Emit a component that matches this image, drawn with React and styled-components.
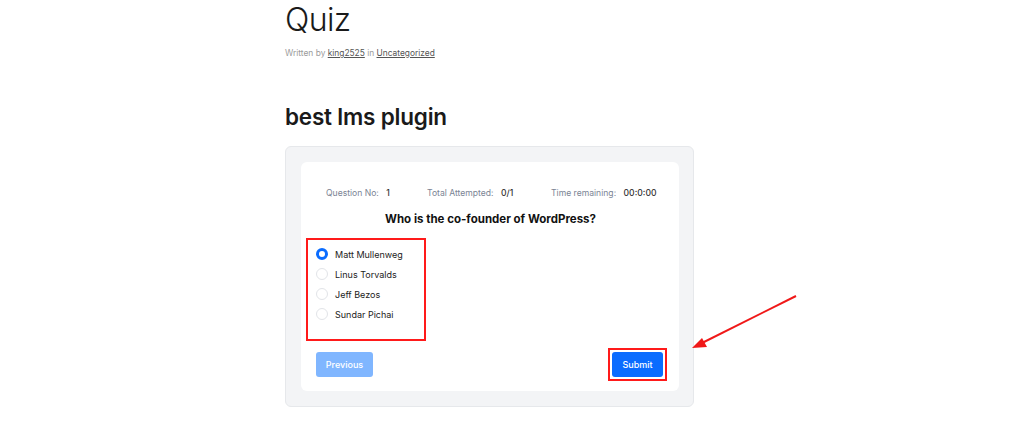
import React from "react";
import styled, { createGlobalStyle } from "styled-components";

const GlobalStyle = createGlobalStyle`
  html, body {
    margin: 0;
    padding: 0;
    background: #ffffff;
  }
  body {
    font-family: Inter, "Noto Sans", "Liberation Sans", sans-serif;
    color: #111;
  }
`;

const Page = styled.div`
  position: relative;
  width: 1024px;
  height: 448px;
  overflow: hidden;
  padding-left: 285px;
  box-sizing: border-box;
`;

const Column = styled.div`
  width: 409px;
  display: flex;
  flex-direction: column;
`;

const Title = styled.h1`
  margin: 2px 0 0;
  font-size: 32px;
  line-height: 36px;
  font-weight: 300;
  color: #1a1a1a;
  letter-spacing: -0.6px;
`;

const Byline = styled.div`
  margin-top: 9px;
  font-size: 8.4px;
  line-height: 12px;
  color: #9a9a9a;

  a {
    color: #555;
    text-decoration: underline;
  }
`;

const QuizName = styled.h2`
  margin: 44px 0 0;
  font-size: 22.5px;
  line-height: 28px;
  font-weight: 600;
  color: #1a1a1a;
  letter-spacing: -0.2px;
`;

const Outer = styled.div`
  margin-top: 15px;
  background: #f3f4f6;
  border: 1px solid #e6e8eb;
  border-radius: 6px;
  padding: 15px 14px 15px 15px;
`;

const Card = styled.div`
  background: #fff;
  border-radius: 6px;
  padding: 25px 14px 14px 15px;
  height: 229px;
  box-sizing: border-box;
  display: flex;
  flex-direction: column;
`;

const MetaRow = styled.div`
  display: grid;
  grid-template-columns: 101px 124px auto;
  padding-left: 10px;
  font-size: 8.6px;
  line-height: 12px;
`;

const Meta = styled.div`
  color: #7b8494;
  white-space: nowrap;

  b {
    margin-left: 5px;
    color: #333;
    font-weight: 500;
  }
`;

const Question = styled.div`
  margin-top: 13px;
  text-align: center;
  font-size: 11.5px;
  line-height: 14px;
  font-weight: 700;
  color: #111;
`;

const Options = styled.div`
  margin-top: 12px;
  margin-left: -10px;
  width: 120px;
  height: 103px;
  border: 2px solid #ff1a1a;
  padding: 8px 0 0 8px;
  box-sizing: border-box;
  display: flex;
  flex-direction: column;
  gap: 8px;
`;

const Option = styled.label`
  display: flex;
  align-items: center;
  gap: 7px;
  height: 12px;
  font-size: 9px;
  color: #222;
`;

const Radio = styled.span`
  width: 12px;
  height: 12px;
  border-radius: 50%;
  box-sizing: border-box;
  flex-shrink: 0;
  border: ${(p) => (p.$checked ? "3.5px solid #0a6cff" : "1px solid #e2e4e8")};
  background: #fff;
`;

const Footer = styled.div`
  margin-top: auto;
  display: flex;
  justify-content: space-between;
  align-items: center;
`;

const Button = styled.button`
  height: 25px;
  border: none;
  border-radius: 3px;
  padding: 0 8px;
  font-family: inherit;
  font-size: 9px;
  font-weight: 500;
  color: #fff;
  background: ${(p) => (p.$disabled ? "#80b6ff" : "#0a6cff")};
  cursor: pointer;
`;

const Highlight = styled.div`
  border: 2px solid #ff1a1a;
  padding: 2px;
  margin: -4px -2px -4px 0;
  display: flex;
`;

const Arrow = styled.svg`
  position: absolute;
  left: 680px;
  top: 285px;
  pointer-events: none;
`;

export default function App() {
  return (
    <>
      <GlobalStyle />
      <Page>
        <Column>
          <Title>Quiz</Title>
          <Byline>
            Written by <a>king2525</a> in <a>Uncategorized</a>
          </Byline>
          <QuizName>best lms plugin</QuizName>
          <Outer>
            <Card>
              <MetaRow>
                <Meta>
                  Question No: <b>1</b>
                </Meta>
                <Meta>
                  Total Attempted: <b>0/1</b>
                </Meta>
                <Meta>
                  Time remaining: <b>00:0:00</b>
                </Meta>
              </MetaRow>
              <Question>Who is the co-founder of WordPress?</Question>
              <Options>
                <Option>
                  <Radio $checked />
                  Matt Mullenweg
                </Option>
                <Option>
                  <Radio />
                  Linus Torvalds
                </Option>
                <Option>
                  <Radio />
                  Jeff Bezos
                </Option>
                <Option>
                  <Radio />
                  Sundar Pichai
                </Option>
              </Options>
              <Footer>
                <Button $disabled style={{ width: 57 }}>
                  Previous
                </Button>
                <Highlight>
                  <Button style={{ width: 51 }}>Submit</Button>
                </Highlight>
              </Footer>
            </Card>
          </Outer>
        </Column>
        <Arrow width="130" height="75" viewBox="0 0 130 75">
          <line x1="116" y1="11" x2="20" y2="59" stroke="#f01818" strokeWidth="2" />
          <polygon points="12,63 22,53 27,62" fill="#f01818" />
        </Arrow>
      </Page>
    </>
  );
}
